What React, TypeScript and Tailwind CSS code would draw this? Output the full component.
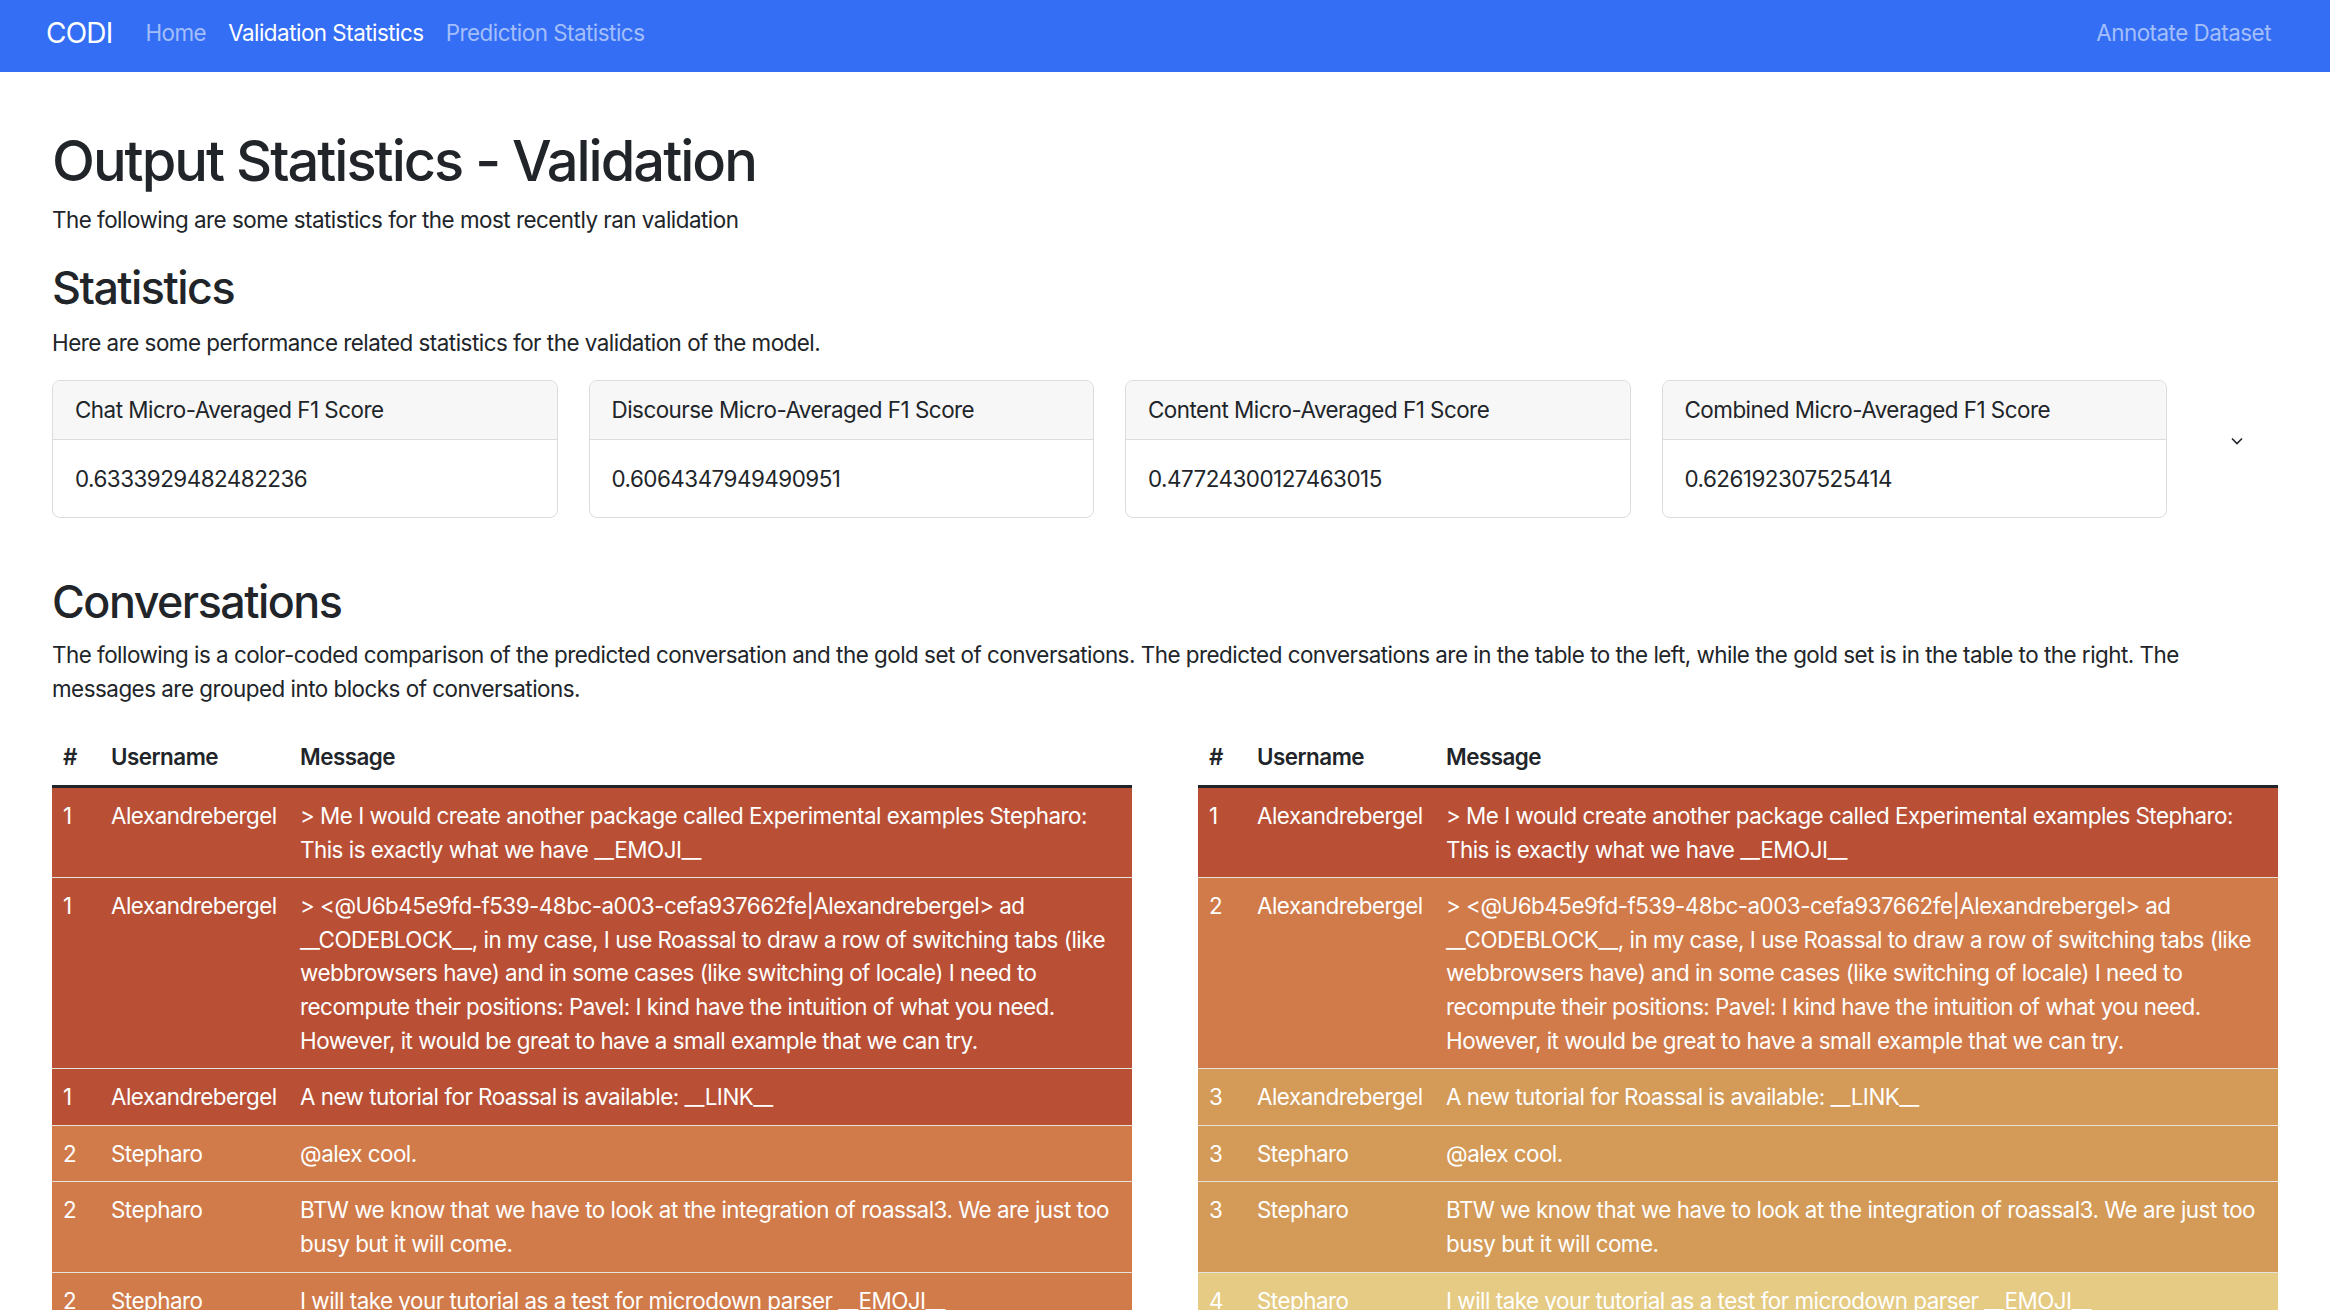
import React from "react";

interface rowType {
  conv: number;
  user: string;
  msg: string;
}

const FONT = { fontFamily: "Inter, 'Noto Sans', sans-serif" };

const colours: Record<string, string> = {
  red: "bg-[#b95036]",
  orange: "bg-[#d17b4a]",
  tan: "bg-[#d49a57]",
  yellow: "bg-[#e5cb84]",
};

const messages = [
  { user: "Alexandrebergel", msg: "> Me I would create another package called Experimental examples Stepharo: This is exactly what we have __EMOJI__" },
  {
    user: "Alexandrebergel",
    msg: "> <@U6b45e9fd-f539-48bc-a003-cefa937662fe|Alexandrebergel> ad __CODEBLOCK__, in my case, I use Roassal to draw a row of switching tabs (like webbrowsers have) and in some cases (like switching of locale) I need to recompute their positions: Pavel: I kind have the intuition of what you need. However, it would be great to have a small example that we can try.",
  },
  { user: "Alexandrebergel", msg: "A new tutorial for Roassal is available: __LINK__" },
  { user: "Stepharo", msg: "@alex cool." },
  { user: "Stepharo", msg: "BTW we know that we have to look at the integration of roassal3. We are just too busy but it will come." },
  { user: "Stepharo", msg: "I will take your tutorial as a test for microdown parser __EMOJI__" },
];

const predicted: rowType[] = messages.map((m, i) => ({ ...m, conv: [1, 1, 1, 2, 2, 2][i] }));
const gold: rowType[] = messages.map((m, i) => ({ ...m, conv: [1, 2, 3, 3, 3, 4][i] }));

const convColour = (conv: number, side: "left" | "right") => {
  if (side == "left") return conv == 1 ? colours.red : colours.orange;
  return [colours.red, colours.orange, colours.tan, colours.yellow][conv - 1];
};

const stats = [
  { title: "Chat Micro-Averaged F1 Score", value: "0.6333929482482236" },
  { title: "Discourse Micro-Averaged F1 Score", value: "0.6064347949490951" },
  { title: "Content Micro-Averaged F1 Score", value: "0.47724300127463015" },
  { title: "Combined Micro-Averaged F1 Score", value: "0.626192307525414" },
];

function ConvTable({ rows, side }: { rows: rowType[]; side: "left" | "right" }) {
  return (
    <table className="w-[1080px] table-fixed border-collapse text-left align-top">
      <colgroup>
        <col className="w-[48px]" />
        <col className="w-[189px]" />
        <col />
      </colgroup>
      <thead>
        <tr className="border-b-[3px] border-[#212529]">
          <th className="px-[11px] py-[11px] font-semibold">#</th>
          <th className="px-[11px] py-[11px] font-semibold">Username</th>
          <th className="px-[11px] py-[11px] font-semibold">Message</th>
        </tr>
      </thead>
      <tbody>
        {rows.map((r, index) => (
          <tr key={index} className={`border-b border-[#e6e2dc] text-white ${convColour(r.conv, side)}`}>
            <td className="px-[11px] py-[11px] align-top">{r.conv}</td>
            <td className="px-[11px] py-[11px] align-top">{r.user}</td>
            <td className="px-[11px] py-[11px] align-top">{r.msg}</td>
          </tr>
        ))}
      </tbody>
    </table>
  );
}

export default function App() {
  return (
    <div className="min-h-screen bg-white text-[22.4px] leading-[1.5] tracking-[-0.5px] text-[#212529]" style={FONT}>
      <nav className="flex h-[72px] items-center bg-[#336ef5] pb-[6px] pl-[46px] pr-[59px]">
        <span className="mr-[22px] text-[28px] tracking-[-0.8px] text-white">CODI</span>
        <a className="px-[11px] text-[#a3befa]">Home</a>
        <a className="px-[11px] text-white">Validation Statistics</a>
        <a className="px-[11px] text-[#a3befa]">Prediction Statistics</a>
        <a className="ml-auto text-[#a3befa]">Annotate Dataset</a>
      </nav>

      <main className="px-[52px] pt-[56px]">
        <h1 className="mb-[8px] text-[56px] font-medium leading-[1.2] tracking-[-2px]">Output Statistics - Validation</h1>
        <p className="mb-[25px]">The following are some statistics for the most recently ran validation</p>

        <h2 className="mb-[10px] text-[44.8px] font-medium leading-[1.2] tracking-[-1.5px]">Statistics</h2>
        <p className="mb-[21px]">Here are some performance related statistics for the validation of the model.</p>

        <div className="flex">
          <div className="grid w-[2115px] grid-cols-4 gap-[31px]">
            {stats.map((s) => (
              <div key={s.title} className="overflow-hidden rounded-[8px] border border-[#dcdcdc]">
                <div className="border-b border-[#dcdcdc] bg-[#f7f7f7] px-[22px] py-[12px]">{s.title}</div>
                <div className="px-[22px] py-[22px]">{s.value}</div>
              </div>
            ))}
          </div>
          <div className="pl-[64px] pt-[57px]">
            <svg width="12" height="8" viewBox="0 0 12 8" fill="none">
              <polyline points="1,1.5 6,6.5 11,1.5" stroke="#212529" strokeWidth="1.6" />
            </svg>
          </div>
        </div>

        <h2 className="mb-[8px] mt-[58px] text-[44.8px] font-medium leading-[1.2] tracking-[-1.5px]">Conversations</h2>
        <p className="mb-[24px]">
          The following is a color-coded comparison of the predicted conversation and the gold set of conversations. The predicted
          conversations are in the table to the left, while the gold set is in the table to the right. The messages are grouped into
          blocks of conversations.
        </p>

        <div className="flex gap-[66px]">
          <ConvTable rows={predicted} side="left" />
          <ConvTable rows={gold} side="right" />
        </div>
      </main>
    </div>
  );
}
